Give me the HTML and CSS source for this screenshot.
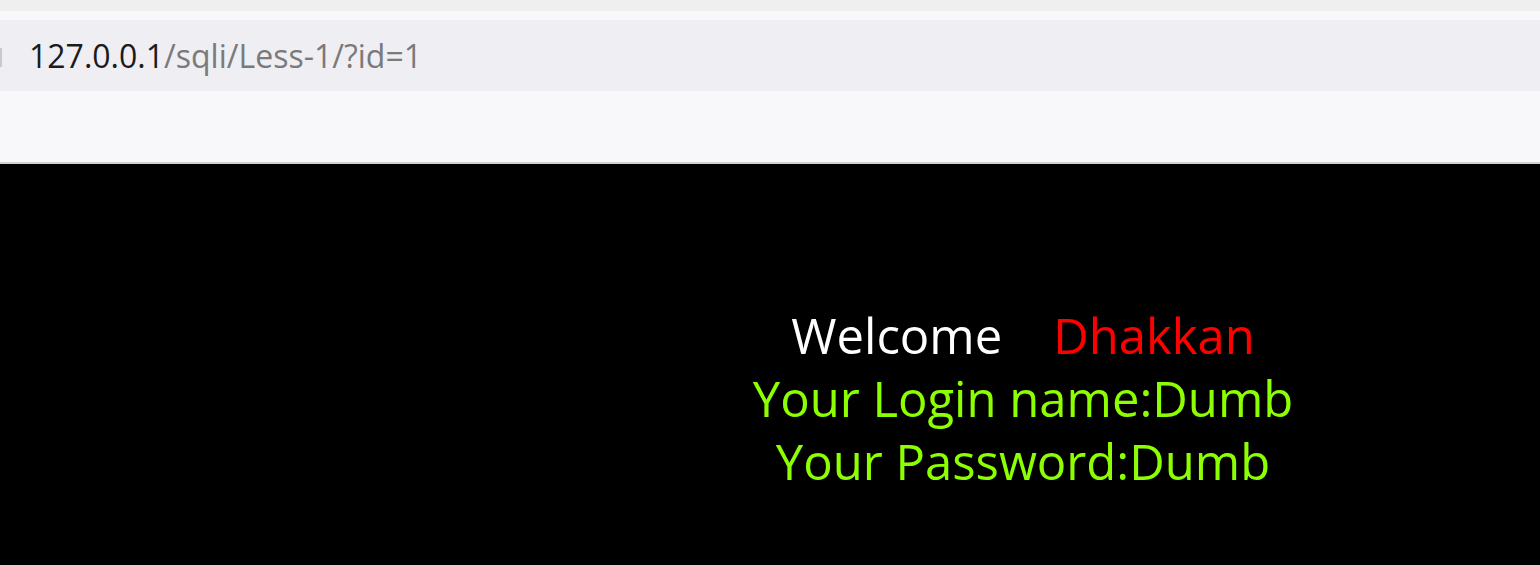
FILE: index.html
```html
<!DOCTYPE html>
<html>
<head>
<meta charset="utf-8">
<link rel="stylesheet" href="styles.css">
</head>
<body>
<div class="chrome">
  <div class="tabstrip"></div>
  <div class="gap"></div>
  <div class="addressbar">
    <span class="lock"></span>
    <span class="url"><span class="host">127.0.0.1</span><span class="path">/sqli/Less-1/?id=1</span></span>
  </div>
  <div class="toolbar"></div>
</div>
<main class="page">
  <div class="result">
    <div class="welcome">Welcome&nbsp;&nbsp;&nbsp; <span class="name">Dhakkan </span></div>
    <div class="green">Your Login name:Dumb</div>
    <div class="green">Your Password:Dumb</div>
  </div>
</main>
</body>
</html>
```

FILE: styles.css
```css
html, body {
  margin: 0;
  padding: 0;
  height: 100%;
  overflow: hidden;
}
body {
  display: flex;
  flex-direction: column;
  background: #000;
  font-family: "Open Sans", "Noto Sans", sans-serif;
}
.chrome {
  flex: none;
  display: flex;
  flex-direction: column;
}
.tabstrip {
  height: 11px;
  background: #efefef;
}
.gap {
  height: 9px;
  background: #f8f8fa;
}
.addressbar {
  height: 71px;
  background: #efeef3;
  display: flex;
  align-items: center;
}
.lock {
  width: 2px;
  height: 19px;
  background: #c9c9cc;
  margin-right: 27px;
  margin-top: 3px;
}
.url {
  font-size: 32px;
  letter-spacing: 0;
  padding-top: 0;
}
.host { color: #1b1b1b; }
.path { color: #7a7a7a; }
.toolbar {
  height: 71px;
  background: #f8f8fa;
  border-bottom: 2px solid #d2d2d2;
}
.page {
  flex: 1;
  background: #000;
  padding-top: 140px;
  padding-left: 506px;
}
.result {
  text-align: center;
  font-size: 49px;
  line-height: 63px;
}
.welcome { color: #fff; }
.name { color: #ff0000; }
.green { color: #8cff00; }
```
